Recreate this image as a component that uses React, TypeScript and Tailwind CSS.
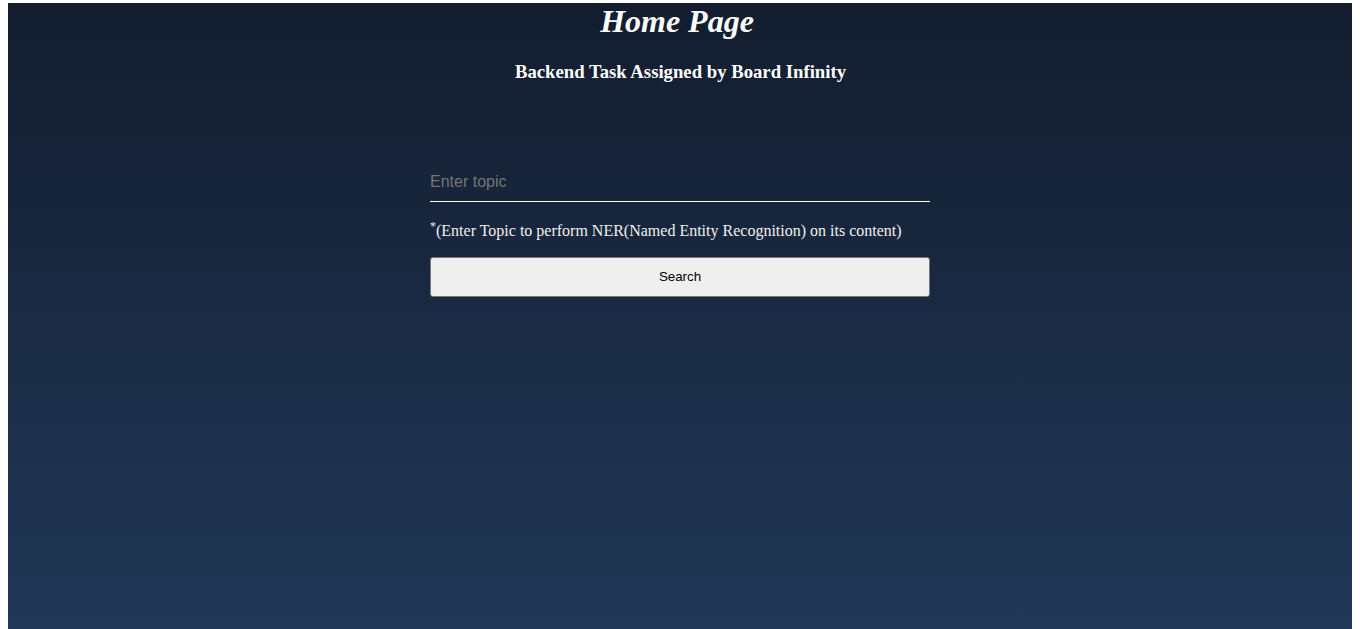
import React from "react";

export default function App() {
  return (
    <div className="min-h-screen bg-white px-2 pt-[3px]">
      <div
        className="h-[626px] bg-gradient-to-b from-[#131d2f] to-[#213857] flex flex-col items-center"
        style={{ fontFamily: '"Liberation Serif", "Times New Roman", serif' }}
      >
        <h1 className="text-[32px] leading-[37px] font-bold italic text-white m-0 pr-[6px]">Home Page</h1>
        <h3 className="text-[18.72px] leading-[22px] font-bold text-white mt-[21px] pl-[1px]">
          Backend Task Assigned by Board Infinity
        </h3>
        <div className="w-[500px] mt-[79px] flex flex-col">
          <input
            type="text"
            placeholder="Enter topic"
            className="h-[40px] w-full bg-transparent border-0 border-b border-white text-white text-[16px] placeholder:text-[#757575] outline-none px-0"
            style={{ fontFamily: '"Liberation Sans", Arial, sans-serif' }}
          />
          <p className="mt-[20px] text-[16px] leading-[18px] text-[#f0f0f0]">
            <sup>*</sup>(Enter Topic to perform NER(Named Entity Recognition) on its content)
          </p>
          <button
            className="mt-[17px] h-[40px] w-full bg-[#efefef] border border-[#767676] rounded-[3px] text-[13.33px] text-black"
            style={{ fontFamily: '"Liberation Sans", Arial, sans-serif' }}
          >
            Search
          </button>
        </div>
      </div>
    </div>
  );
}
